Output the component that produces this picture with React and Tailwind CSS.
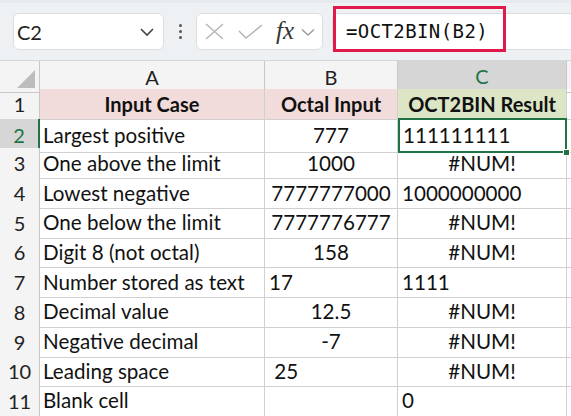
import React from 'react';

const rows = [
  ['Largest positive', '777', 'c', '111111111', 'l'],
  ['One above the limit', '1000', 'c', '#NUM!', 'c'],
  ['Lowest negative', '7777777000', 'c', '1000000000', 'l'],
  ['One below the limit', '7777776777', 'c', '#NUM!', 'c'],
  ['Digit 8 (not octal)', '158', 'c', '#NUM!', 'c'],
  ['Number stored as text', '17', 'l', '1111', 'l'],
  ['Decimal value', '12.5', 'c', '#NUM!', 'c'],
  ['Negative decimal', '-7', 'c', '#NUM!', 'c'],
  ['Leading space', '\u00a025', 'l', '#NUM!', 'c'],
  ['Blank cell', '', 'l', '0', 'l'],
];

const cols = 'grid grid-cols-[40px_225px_133px_169px_1fr]';
const cell = 'border-r border-b border-[#d0d0d0] flex items-center whitespace-pre overflow-hidden';

const Toolbar = () => (
  <div className="relative h-[61px] bg-[#eef1f4] border-t-[3px] border-[#e6eaee] border-b border-b-[#d6d6d6]">
    <div className="flex items-start pt-[10px]">
      {/* name box */}
      <div className="ml-[13px] w-[151px] h-[37px] bg-white rounded-[6px] border border-[#dedede] flex items-center justify-between pl-[3px] pr-[8px]">
        <span className="text-[20px] text-[#222]">C2</span>
        <svg width="16" height="10" viewBox="0 0 16 10" fill="none" stroke="#444" strokeWidth="1.6"><path d="M2 2l6 6 6-6" /></svg>
      </div>
      {/* dots */}
      <div className="w-[32px] h-[37px] flex flex-col items-center justify-center gap-[3px]">
        <span className="w-[3px] h-[3px] bg-[#555] rounded-full" />
        <span className="w-[3px] h-[3px] bg-[#555] rounded-full" />
        <span className="w-[3px] h-[3px] bg-[#555] rounded-full" />
      </div>
      {/* function box */}
      <div className="w-[127px] h-[37px] bg-white rounded-[6px] border border-[#dedede] flex items-center pl-[8px]">
        <svg width="19" height="17" viewBox="0 0 19 17" stroke="#b3b3b3" strokeWidth="1.4"><path d="M1 1l17 15M18 1L1 16" /></svg>
        <svg className="ml-[14px]" width="25" height="15" viewBox="0 0 25 15" fill="none" stroke="#b3b3b3" strokeWidth="1.4"><path d="M1 7l7 7L24 1" /></svg>
        <span className="ml-[13px] font-['Liberation_Serif'] italic text-[25px] leading-none text-[#333] -mt-[3px]">fx</span>
        <svg className="ml-[7px]" width="14" height="8" viewBox="0 0 14 8" fill="none" stroke="#9a9a9a" strokeWidth="1.4"><path d="M1 1.5l6 5.5 6-5.5" /></svg>
      </div>
      {/* formula input */}
      <div className="ml-[9px] flex-1 h-[37px] bg-white rounded-l-[6px] border border-r-0 border-[#dedede] flex items-center pl-[13px]">
        <span className="font-['DejaVu_Sans_Mono'] text-[19px] text-[#111] tracking-[0.4px]">=OCT2BIN(B2)</span>
      </div>
    </div>
    <div className="absolute left-[333px] top-[3px] w-[173px] h-[46px] border-[3px] border-[#e0194b]" />
  </div>
);

export default function App() {
  return (
    <div className="w-[571px] h-[416px] overflow-hidden bg-white font-['Lato',sans-serif] text-[#111]">
      <Toolbar />
      {/* column headers */}
      <div className={`${cols} h-[28px] bg-[#f4f4f4] text-[20px] text-[#222]`}>
        <div className="relative border-r border-b border-[#c8c8c8]">
          <div className="absolute right-[4px] bottom-[4px] w-0 h-0 border-l-[18px] border-l-transparent border-b-[18px] border-b-[#bdbdbd]" />
        </div>
        <div className="border-r border-b border-[#c8c8c8] flex items-center justify-center">A</div>
        <div className="border-r border-b border-[#c8c8c8] flex items-center justify-center">B</div>
        <div className="bg-[#d6d6d6] border-r border-[#c8c8c8] border-b-2 border-b-[#217346] flex items-center justify-center text-[#217346]">C</div>
        <div className="border-b border-[#c8c8c8]" />
      </div>
      {/* row 1 */}
      <div className={`${cols} h-[29.7px] text-[20px] font-bold`}>
        <div className="bg-[#f4f4f4] border-r border-b border-[#c8c8c8] flex items-center justify-center font-normal text-[#222]">1</div>
        <div className={`${cell} justify-center bg-[#f2dcdb]`}>Input Case</div>
        <div className={`${cell} justify-center bg-[#f2dcdb]`}>Octal Input</div>
        <div className={`${cell} justify-center bg-[#dce6c6]`}>OCT2BIN Result</div>
        <div className="border-b border-[#d0d0d0]" />
      </div>
      {rows.map((r, i) => {
        const n = i + 2;
        const sel = n === 2;
        return (
          <div key={n} className={`${cols} h-[29.7px] text-[20.6px]`}>
            <div
              className={
                sel
                  ? 'bg-[#d6d6d6] border-r-2 border-r-[#217346] border-b border-b-[#c8c8c8] flex items-center justify-center text-[20px] text-[#217346]'
                  : 'bg-[#f4f4f4] border-r border-b border-[#c8c8c8] flex items-center justify-center text-[20px] text-[#222]'
              }
            >
              {n}
            </div>
            <div className={`${cell} pl-[3px]`}>{r[0]}</div>
            <div className={`${cell} ${r[2] === 'c' ? 'justify-center' : 'pl-[4px]'}`}>{r[1]}</div>
            {sel ? (
              <div className="relative border-2 border-[#217346] flex items-center pl-[3px] -mt-[1px]">
                {r[3]}
                <span className="absolute -right-[5px] -bottom-[5px] w-[7px] h-[7px] bg-[#217346] border border-white" />
              </div>
            ) : (
              <div className={`${cell} ${r[4] === 'c' ? 'justify-center' : 'pl-[4px]'}`}>{r[3]}</div>
            )}
            <div className="border-b border-[#d0d0d0]" />
          </div>
        );
      })}
    </div>
  );
}
